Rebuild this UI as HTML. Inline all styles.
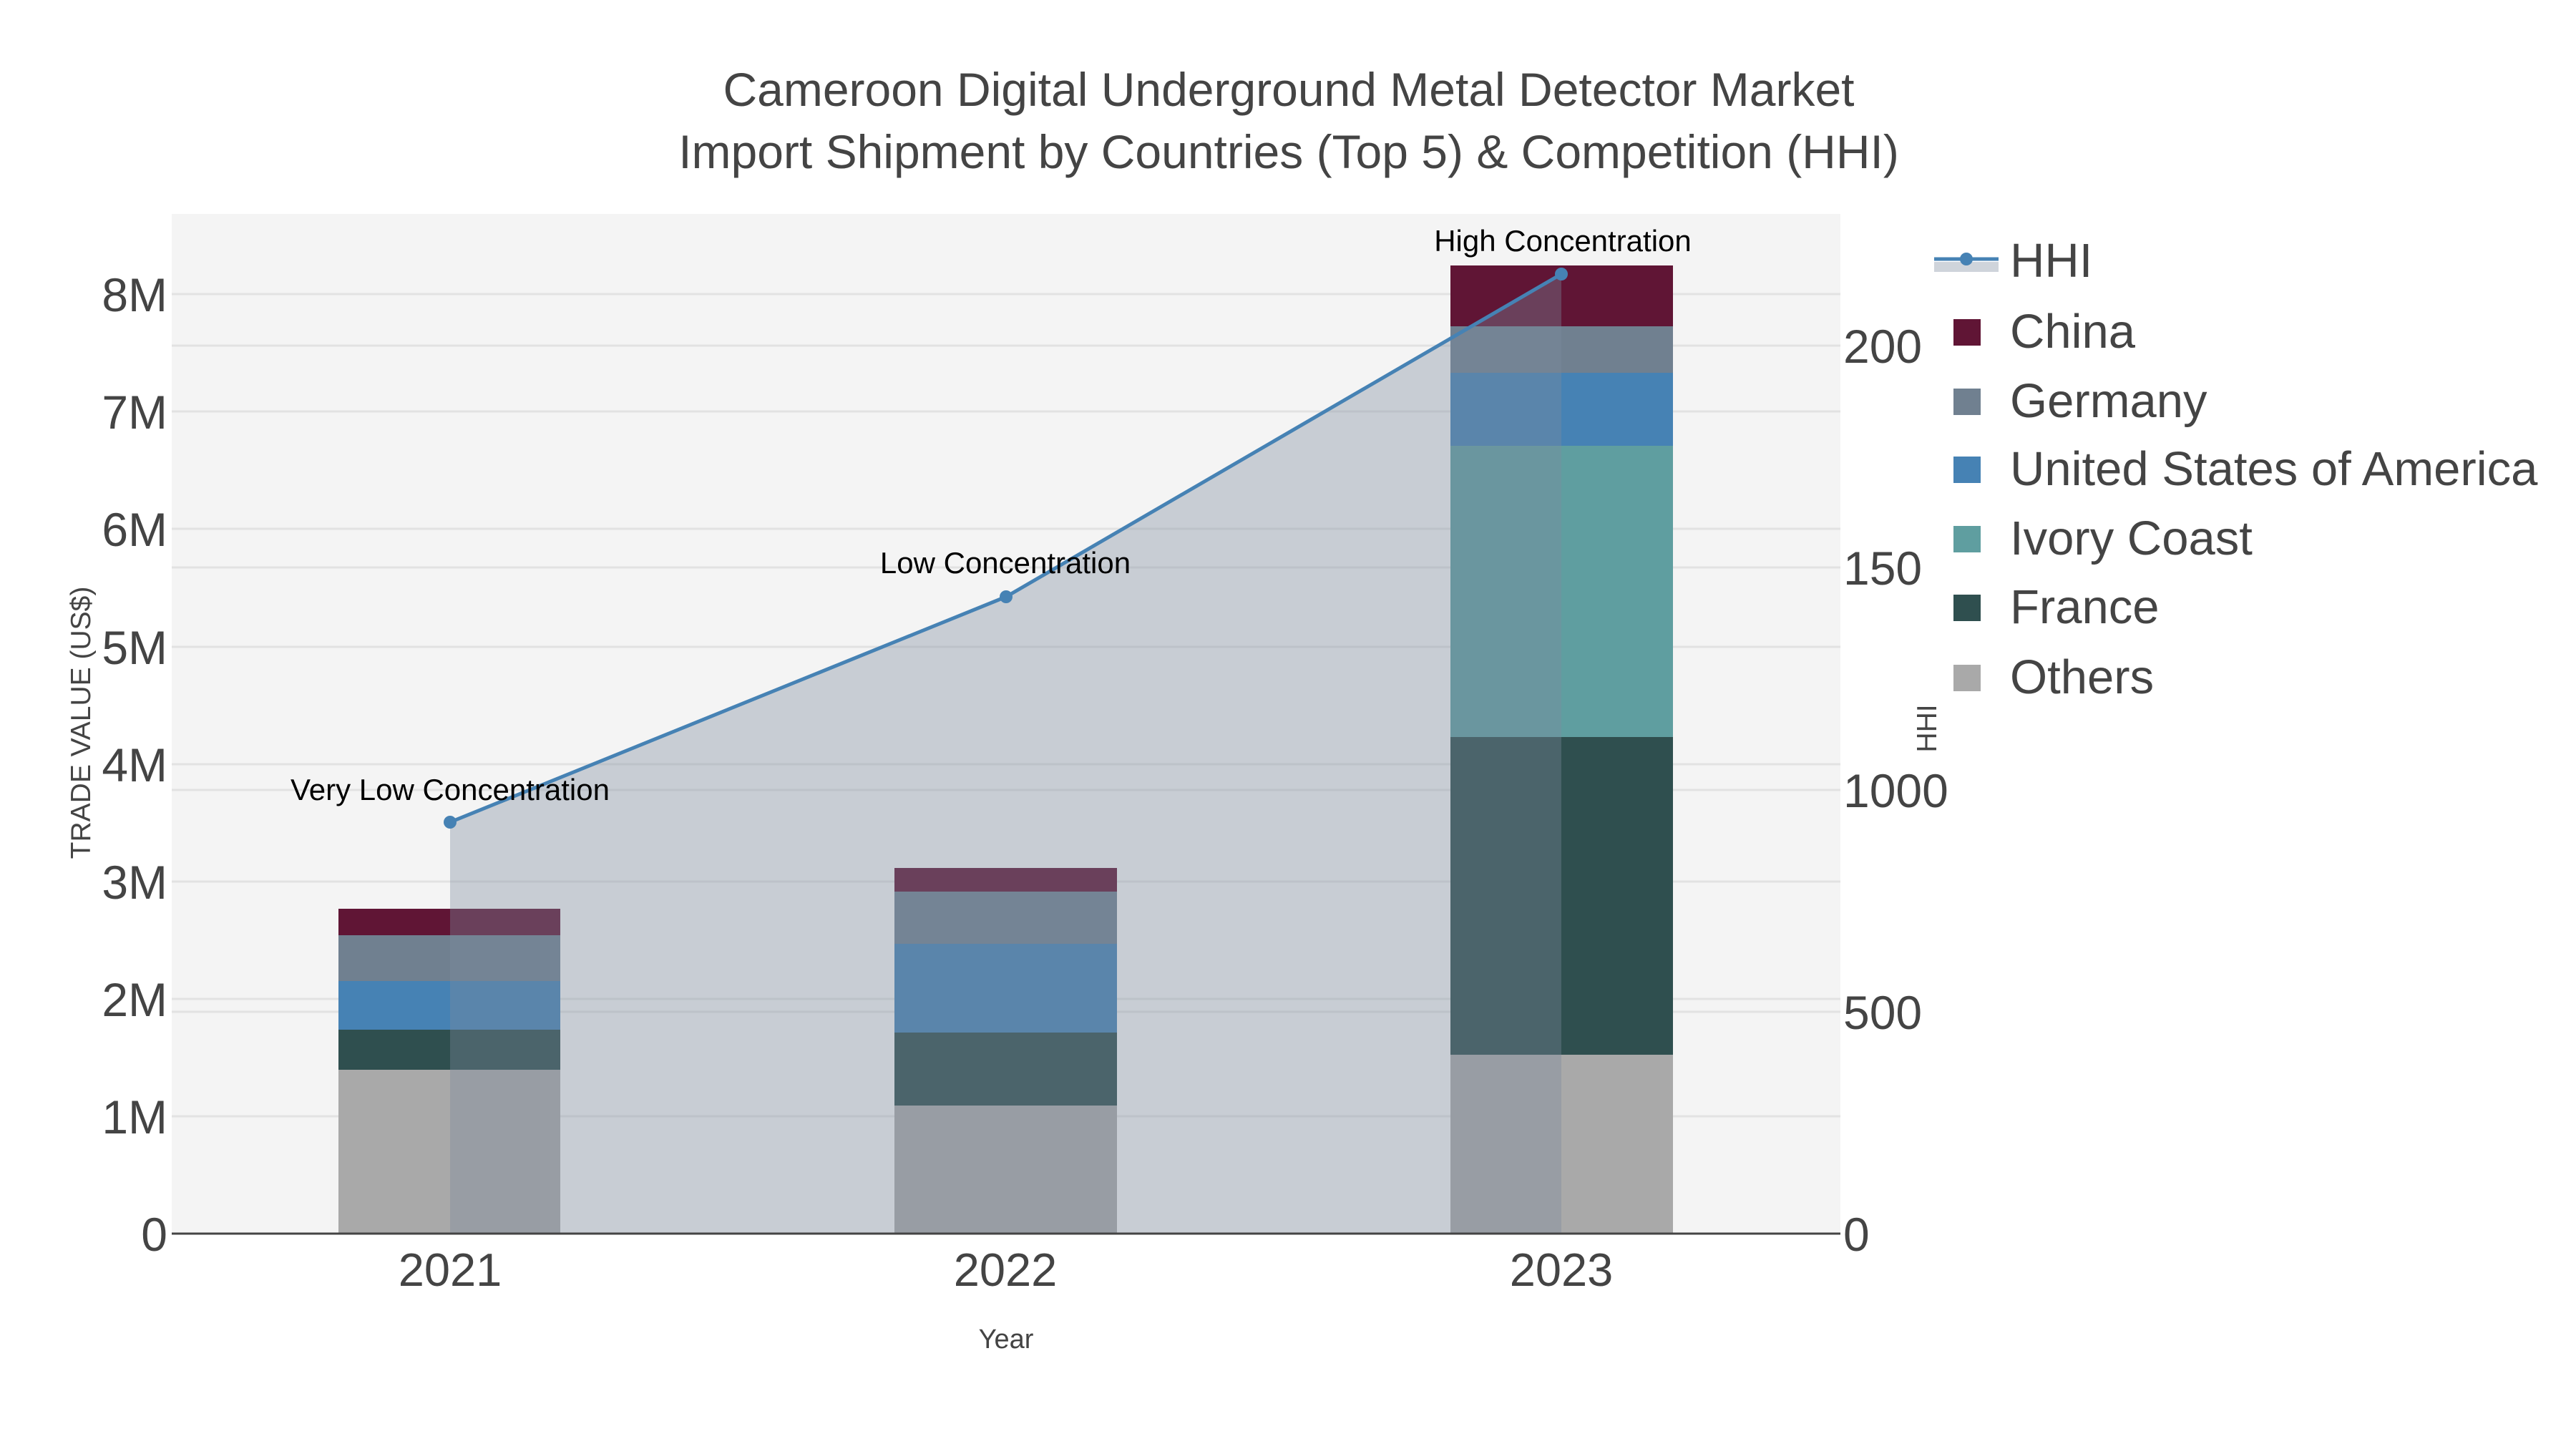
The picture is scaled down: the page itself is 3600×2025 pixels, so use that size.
<!DOCTYPE html>
<html><head><meta charset="utf-8"><style>
html,body{margin:0;padding:0;background:#fff;}
svg{display:block;font-family:"Liberation Sans",Arial,sans-serif;}
</style></head><body>
<svg width="3600" height="2025" viewBox="0 0 3600 2025" xmlns="http://www.w3.org/2000/svg">
<rect x="0" y="0" width="3600" height="2025" fill="#fff"/>
<rect x="240" y="299" width="2332" height="1425" fill="#f4f4f4"/>
<g stroke="#e2e2e2" stroke-width="3">
<line x1="240" y1="1560" x2="2572" y2="1560"/>
<line x1="240" y1="1396" x2="2572" y2="1396"/>
<line x1="240" y1="1232" x2="2572" y2="1232"/>
<line x1="240" y1="1068" x2="2572" y2="1068"/>
<line x1="240" y1="904" x2="2572" y2="904"/>
<line x1="240" y1="739" x2="2572" y2="739"/>
<line x1="240" y1="575" x2="2572" y2="575"/>
<line x1="240" y1="411" x2="2572" y2="411"/>
<line x1="240" y1="1414" x2="2572" y2="1414"/>
<line x1="240" y1="1104" x2="2572" y2="1104"/>
<line x1="240" y1="793" x2="2572" y2="793"/>
<line x1="240" y1="483" x2="2572" y2="483"/>
</g>
<!-- 2021 -->
<rect x="473" y="1495" width="310" height="229" fill="#a9a9a9"/>
<rect x="473" y="1439" width="310" height="56" fill="#2f4f4f"/>
<rect x="473" y="1371" width="310" height="68" fill="#4682b4"/>
<rect x="473" y="1307" width="310" height="64" fill="#708090"/>
<rect x="473" y="1270" width="310" height="37" fill="#601535"/>
<!-- 2022 -->
<rect x="1250" y="1545" width="311" height="179" fill="#a9a9a9"/>
<rect x="1250" y="1443" width="311" height="102" fill="#2f4f4f"/>
<rect x="1250" y="1319" width="311" height="124" fill="#4682b4"/>
<rect x="1250" y="1246" width="311" height="73" fill="#708090"/>
<rect x="1250" y="1213" width="311" height="33" fill="#601535"/>
<!-- 2023 -->
<rect x="2027" y="1474" width="311" height="250" fill="#a9a9a9"/>
<rect x="2027" y="1030" width="311" height="444" fill="#2f4f4f"/>
<rect x="2027" y="623" width="311" height="407" fill="#5f9ea0"/>
<rect x="2027" y="521" width="311" height="102" fill="#4682b4"/>
<rect x="2027" y="456" width="311" height="65" fill="#708090"/>
<rect x="2027" y="371" width="311" height="85" fill="#601535"/>
<!-- HHI fill -->
<polygon points="629,1149 1406,834 2182,383 2182,1724 629,1724" fill="rgb(126,137,158)" fill-opacity="0.37"/>
<line x1="240" y1="1724" x2="2572" y2="1724" stroke="#444" stroke-width="3"/>
<polyline points="629,1149 1406,834 2182,383" fill="none" stroke="#4682b4" stroke-width="5"/>
<circle cx="629" cy="1149" r="9" fill="#4682b4"/>
<circle cx="1406" cy="834" r="9" fill="#4682b4"/>
<circle cx="2182" cy="383" r="9" fill="#4682b4"/>
<g font-size="42" fill="#000" text-anchor="middle">
<text x="629" y="1118">Very Low Concentration</text>
<text x="1405" y="801">Low Concentration</text>
<text x="2184" y="351">High Concentration</text>
</g>
<!-- left axis -->
<g font-size="66" fill="#444" text-anchor="end">
<text x="234" y="1748">0</text>
<text x="234" y="1584">1M</text>
<text x="234" y="1420">2M</text>
<text x="234" y="1256">3M</text>
<text x="234" y="1092">4M</text>
<text x="234" y="928">5M</text>
<text x="234" y="763">6M</text>
<text x="234" y="599">7M</text>
<text x="234" y="435">8M</text>
</g>
<g font-size="66" fill="#444" text-anchor="start">
<text x="2576" y="1748">0</text>
<text x="2576" y="1438">500</text>
<text x="2576" y="1128">1000</text>
<text x="2576" y="817">150</text>
<text x="2576" y="507">200</text>
</g>
<text transform="translate(126,1010) rotate(-90)" font-size="39" fill="#444" text-anchor="middle">TRADE VALUE (US$)</text>
<text transform="translate(2706,1018) rotate(-90)" font-size="39" fill="#444" text-anchor="middle">HHI</text>
<g font-size="65" fill="#444" text-anchor="middle">
<text x="629" y="1797">2021</text>
<text x="1405" y="1797">2022</text>
<text x="2182" y="1797">2023</text>
</g>
<text x="1406" y="1884" font-size="38" fill="#444" text-anchor="middle">Year</text>
<g font-size="66" fill="#444" text-anchor="middle">
<text x="1801" y="148">Cameroon Digital Underground Metal Detector Market</text>
<text x="1801" y="235">Import Shipment by Countries (Top 5) &amp; Competition (HHI)</text>
</g>
<!-- legend -->
<rect x="2703" y="366" width="90" height="14" fill="rgb(126,137,158)" fill-opacity="0.37"/>
<line x1="2703" y1="362" x2="2793" y2="362" stroke="#4682b4" stroke-width="5"/>
<circle cx="2748" cy="362" r="9" fill="#4682b4"/>
<rect x="2730" y="446" width="38" height="37" fill="#601535"/>
<rect x="2730" y="543" width="38" height="37" fill="#708090"/>
<rect x="2730" y="638" width="38" height="37" fill="#4682b4"/>
<rect x="2730" y="735" width="38" height="37" fill="#5f9ea0"/>
<rect x="2730" y="831" width="38" height="37" fill="#2f4f4f"/>
<rect x="2730" y="929" width="38" height="37" fill="#a9a9a9"/>
<g font-size="67" fill="#444">
<text x="2809" y="387">HHI</text>
<text x="2809" y="486">China</text>
<text x="2809" y="583">Germany</text>
<text x="2809" y="678">United States of America</text>
<text x="2809" y="775">Ivory Coast</text>
<text x="2809" y="871">France</text>
<text x="2809" y="969">Others</text>
</g>
</svg>
</body></html>
